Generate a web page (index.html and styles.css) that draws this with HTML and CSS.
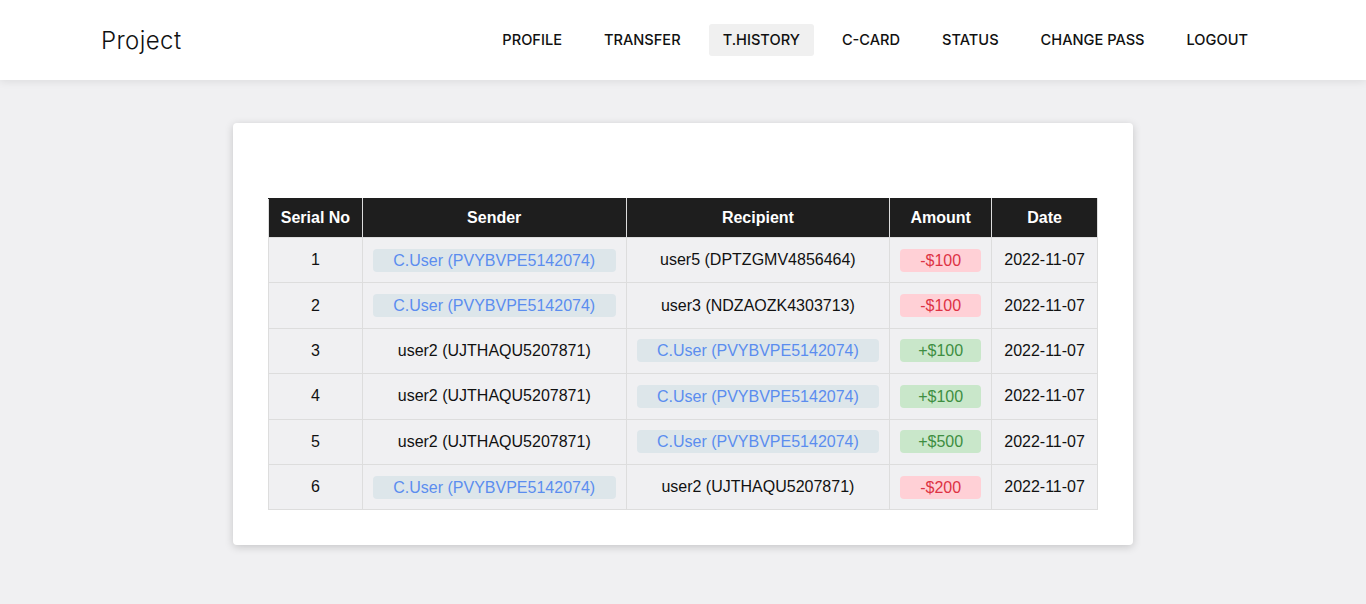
FILE: index.html
```html
<!DOCTYPE html>
<html lang="en">
<head>
<meta charset="utf-8">
<title>Project</title>
<link rel="stylesheet" href="styles.css">
</head>
<body>
<header class="topbar">
  <div class="brand">Project</div>
  <nav class="nav">
    <a class="nav-link" href="#">PROFILE</a>
    <a class="nav-link" href="#">TRANSFER</a>
    <a class="nav-link active" href="#">T.HISTORY</a>
    <a class="nav-link" href="#">C-CARD</a>
    <a class="nav-link" href="#">STATUS</a>
    <a class="nav-link" href="#">CHANGE PASS</a>
    <a class="nav-link" href="#">LOGOUT</a>
  </nav>
</header>
<main class="main">
  <section class="card">
    <table class="history">
      <thead>
        <tr>
          <th class="c-serial">Serial No</th>
          <th class="c-party">Sender</th>
          <th class="c-party">Recipient</th>
          <th class="c-amount">Amount</th>
          <th class="c-date">Date</th>
        </tr>
      </thead>
      <tbody>
        <tr>
          <td>1</td>
          <td><span class="me">C.User (PVYBVPE5142074)</span></td>
          <td>user5 (DPTZGMV4856464)</td>
          <td><span class="amt neg">-$100</span></td>
          <td>2022-11-07</td>
        </tr>
        <tr>
          <td>2</td>
          <td><span class="me">C.User (PVYBVPE5142074)</span></td>
          <td>user3 (NDZAOZK4303713)</td>
          <td><span class="amt neg">-$100</span></td>
          <td>2022-11-07</td>
        </tr>
        <tr>
          <td>3</td>
          <td>user2 (UJTHAQU5207871)</td>
          <td><span class="me">C.User (PVYBVPE5142074)</span></td>
          <td><span class="amt pos">+$100</span></td>
          <td>2022-11-07</td>
        </tr>
        <tr>
          <td>4</td>
          <td>user2 (UJTHAQU5207871)</td>
          <td><span class="me">C.User (PVYBVPE5142074)</span></td>
          <td><span class="amt pos">+$100</span></td>
          <td>2022-11-07</td>
        </tr>
        <tr>
          <td>5</td>
          <td>user2 (UJTHAQU5207871)</td>
          <td><span class="me">C.User (PVYBVPE5142074)</span></td>
          <td><span class="amt pos">+$500</span></td>
          <td>2022-11-07</td>
        </tr>
        <tr>
          <td>6</td>
          <td><span class="me">C.User (PVYBVPE5142074)</span></td>
          <td>user2 (UJTHAQU5207871)</td>
          <td><span class="amt neg">-$200</span></td>
          <td>2022-11-07</td>
        </tr>
      </tbody>
    </table>
  </section>
</main>
</body>
</html>
```

FILE: styles.css
```css
* { box-sizing: border-box; }

html, body {
  margin: 0;
  padding: 0;
}

body {
  background: #f0f0f2;
  font-family: "Liberation Sans", Arial, sans-serif;
  color: #111;
  min-height: 604px;
}

.topbar {
  height: 80px;
  background: #fff;
  display: flex;
  align-items: center;
  justify-content: space-between;
  padding: 0 104px 0 101px;
  box-shadow: 0 2px 8px rgba(0, 0, 0, 0.08);
  position: relative;
}

.brand {
  font-family: "Inter", "Open Sans", sans-serif;
  font-weight: 300;
  font-size: 24px;
  letter-spacing: 0.4px;
  color: #111;
}

.nav {
  display: flex;
  align-items: center;
  gap: 14px;
}

.nav-link {
  display: block;
  padding: 0 14px;
  height: 32px;
  line-height: 32px;
  border-radius: 3px;
  font-family: "Inter", sans-serif;
  font-weight: 500;
  font-size: 14.6px;
  color: #111;
  text-decoration: none;
}

.nav-link.active {
  background: #f0f0f0;
}

.main {
  padding-top: 43px;
  display: flex;
  justify-content: center;
}

.card {
  width: 900px;
  background: #fff;
  border-radius: 4px;
  box-shadow: 0 2px 8px rgba(0, 0, 0, 0.18);
  padding: 75px 35px 35px;
}

.history {
  width: 830px;
  border-collapse: collapse;
  font-size: 16px;
  text-align: center;
}

.history th {
  background: #1e1e1e;
  color: #fff;
  font-weight: bold;
  height: 39px;
  padding: 0 10px;
  border: 1px solid #dddddd;
  border-top-color: #1e1e1e;
}

.history td {
  background: #f0f0f2;
  height: 45.4px;
  padding: 0 10px;
  border: 1px solid #dddddd;
  color: #111;
}

.c-serial { width: 94px; }
.c-party { width: 264px; }
.c-amount { width: 102px; }
.c-date { width: 106px; }

.me {
  display: block;
  background: #dde6ea;
  color: #5b8def;
  border-radius: 4px;
  height: 23px;
  line-height: 23px;
}

.amt {
  display: block;
  border-radius: 4px;
  height: 23px;
  line-height: 23px;
}

.amt.neg {
  background: #ffd0d6;
  color: #dd3344;
}

.amt.pos {
  background: #c9e7ca;
  color: #3e8e41;
}
```
